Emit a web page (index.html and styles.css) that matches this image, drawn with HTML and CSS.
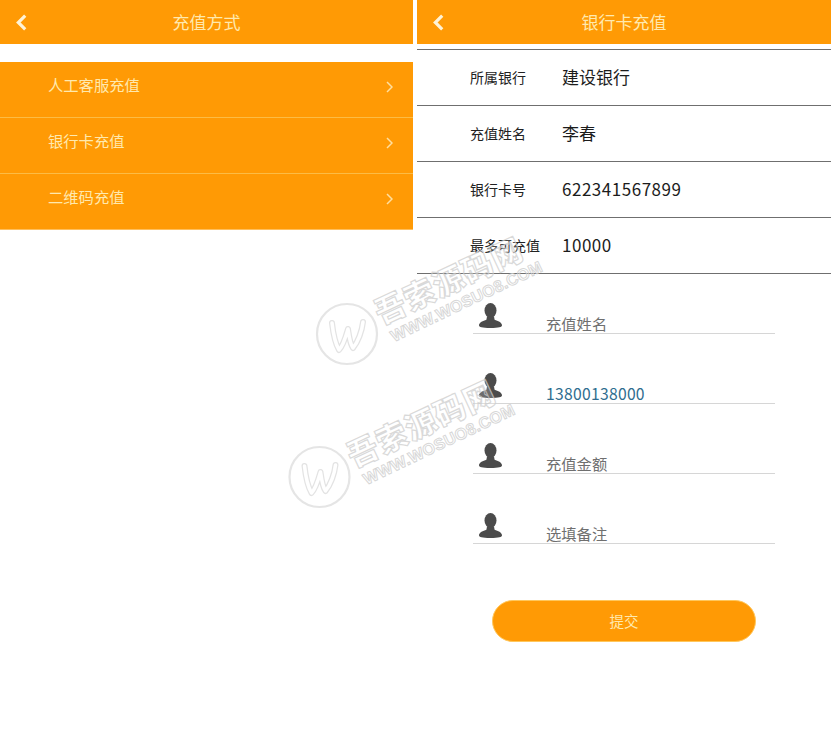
FILE: index.html
```html
<!DOCTYPE html>
<html lang="zh-CN">
<head>
<meta charset="utf-8">
<title>充值</title>
<link rel="stylesheet" href="styles.css">
</head>
<body>
<svg width="0" height="0" class="defs" aria-hidden="true">
  <symbol id="person" viewBox="0 0 23 25">
    <ellipse cx="11.5" cy="7.5" rx="6" ry="7.5"/>
    <path d="M8 13.5h7l.6 3.2c3.2 1.2 7.4 2.6 7.4 5.6 0 1.800-3 2.700-11.500 2.700S0 24.100 0 22.300c0-3 4.200-4.400 7.400-5.600z"/>
  </symbol>
</svg>

<main class="phones">
  <section class="panel panel-methods">
    <header class="topbar">
      <svg class="back" viewBox="0 0 10 16"><path d="M8.500 1.500 2 8l6.500 6.500"/></svg>
      <h1 class="title">充值方式</h1>
    </header>
    <ul class="methods">
      <li class="method"><span class="method-name">人工客服充值</span><svg class="more" viewBox="0 0 7 12"><path d="M1 1l5 5-5 5"/></svg></li>
      <li class="method"><span class="method-name">银行卡充值</span><svg class="more" viewBox="0 0 7 12"><path d="M1 1l5 5-5 5"/></svg></li>
      <li class="method"><span class="method-name">二维码充值</span><svg class="more" viewBox="0 0 7 12"><path d="M1 1l5 5-5 5"/></svg></li>
    </ul>
  </section>

  <section class="panel panel-bank">
    <header class="topbar">
      <svg class="back" viewBox="0 0 10 16"><path d="M8.500 1.500 2 8l6.500 6.500"/></svg>
      <h1 class="title">银行卡充值</h1>
    </header>
    <dl class="info">
      <div class="info-row"><dt>所属银行</dt><dd>建设银行</dd></div>
      <div class="info-row"><dt>充值姓名</dt><dd>李春</dd></div>
      <div class="info-row"><dt>银行卡号</dt><dd class="num">622341567899</dd></div>
      <div class="info-row"><dt>最多可充值</dt><dd class="num">10000</dd></div>
    </dl>
    <div class="fields">
      <div class="field"><svg class="person"><use href="#person"/></svg><span class="hint">充值姓名</span></div>
      <div class="field"><svg class="person"><use href="#person"/></svg><span class="phone">13800138000</span></div>
      <div class="field"><svg class="person"><use href="#person"/></svg><span class="hint">充值金额</span></div>
      <div class="field"><svg class="person"><use href="#person"/></svg><span class="hint">选填备注</span></div>
    </div>
    <button class="submit" type="button">提交</button>
  </section>
</main>

<svg class="watermark" width="832" height="734" viewBox="0 0 832 734" aria-hidden="true">
  <g id="mark">
    <circle class="wm-ring" cx="347" cy="334" r="30"/>
    <path class="wm-logo" d="M332 323c1 9 3 20 7 27 4-4 7-14 9-21 1 7 2 15 5 19 5-6 9-17 10-26"/>
    <path class="wm-logo-in" d="M332 323c1 9 3 20 7 27 4-4 7-14 9-21 1 7 2 15 5 19 5-6 9-17 10-26"/>
    <text class="wm-name" transform="translate(381 325) rotate(-25)">吾索源码网</text>
    <text class="wm-url" transform="translate(394 342) rotate(-25.500)">WWW.WOSUO8.COM</text>
  </g>
  <use href="#mark" x="-27.500" y="143"/>
</svg>
</body>
</html>
```
FILE: styles.css
```css
* { box-sizing: border-box; }

html, body {
  margin: 0;
  padding: 0;
  background: #fff;
}

body {
  width: 832px;
  height: 734px;
  overflow: hidden;
  position: relative;
  font-family: "Noto Sans CJK SC", "Noto Sans", sans-serif;
}

.defs { position: absolute; }

.phones {
  display: flex;
  gap: 4px;
  width: 831px;
}

.panel { flex: none; }
.panel-methods { width: 413px; }
.panel-bank { width: 414px; }

.topbar {
  display: flex;
  align-items: center;
  justify-content: center;
  position: relative;
  height: 44px;
  padding-bottom: 2px;
  background: #ff9a05;
}

.back {
  position: absolute;
  left: 16px;
  top: 14px;
  width: 11px;
  height: 17px;
  fill: none;
  stroke: #fff3d6;
  stroke-width: 3;
}

.title {
  margin: 0;
  font-size: 17px;
  font-weight: 400;
  color: #ffe9ae;
}

.methods {
  list-style: none;
  margin: 18px 0 0;
  padding: 0;
  background: #ff9a05;
}

.method {
  display: flex;
  align-items: center;
  justify-content: space-between;
  height: 56px;
  padding: 0 20px 6px 48px;
  font-size: 15.300px;
  color: #ffe9ae;
  border-bottom: 1px solid #fcbc45;
}

.method-name { margin-bottom: 5px; }

.method:last-child { border-bottom-color: #ffbf5c; }

.more {
  width: 7px;
  height: 12px;
  fill: none;
  stroke: #ffdfa0;
  stroke-width: 1.500;
}

.info {
  margin: 5px 0 0;
  border-top: 1px solid #6f6f6f;
}

.info-row {
  display: flex;
  align-items: center;
  height: 56px;
  padding: 0 0 2px 53px;
  border-bottom: 1px solid #6f6f6f;
}

.info-row dt {
  width: 92px;
  font-size: 14px;
  color: #222;
  white-space: nowrap;
}

.info-row dd {
  margin: 0;
  font-size: 17px;
  color: #1c1c1c;
}

.info-row .num { letter-spacing: 0.520px; }

.fields {
  display: flex;
  flex-direction: column;
  gap: 10px;
  margin-left: 56px;
  width: 302px;
}

.field {
  display: flex;
  align-items: flex-end;
  height: 60px;
  padding-left: 6px;
  border-bottom: 1px solid #d6d6d6;
  line-height: 18px;
}

.person {
  flex: none;
  width: 23px;
  height: 25px;
  margin: 0 44px 5px 0;
  fill: #4b4b4b;
}

.hint {
  padding-bottom: 1px;
  font-size: 15.300px;
  color: #6f6f6f;
}

.phone {
  font-size: 15.700px;
  letter-spacing: 0.280px;
  color: #2f6d8f;
}

.submit {
  display: block;
  width: 264px;
  height: 42px;
  margin: 56px 0 0 75px;
  padding: 0 0 2px;
  font: inherit;
  font-size: 14.500px;
  color: #ffe9ae;
  background: #ff9a05;
  border: 1px solid #ffc75c;
  border-radius: 21px;
}

.watermark {
  position: absolute;
  left: 0;
  top: 0;
  pointer-events: none;
}

.wm-ring {
  fill: none;
  stroke: #e5e5e5;
  stroke-width: 2.200;
}

.wm-logo {
  fill: none;
  stroke: #e3e3e3;
  stroke-width: 6;
  stroke-linejoin: round;
  stroke-linecap: round;
}

.wm-logo-in {
  fill: none;
  stroke: #fff;
  stroke-width: 3.500;
  stroke-linejoin: round;
  stroke-linecap: round;
}

.wm-name {
  font-family: "Noto Sans CJK SC", sans-serif;
  font-size: 31px;
  font-weight: 900;
  fill: rgba(255, 255, 255, 0.2);
  stroke: rgba(205, 205, 205, 0.75);
  stroke-width: 1.200;
  letter-spacing: 1px;
}

.wm-url {
  font-family: "Liberation Sans", sans-serif;
  font-size: 16px;
  font-weight: 700;
  fill: rgba(255, 255, 255, 0.2);
  stroke: rgba(205, 205, 205, 0.8);
  stroke-width: 1;
  letter-spacing: 0.300px;
}
```
